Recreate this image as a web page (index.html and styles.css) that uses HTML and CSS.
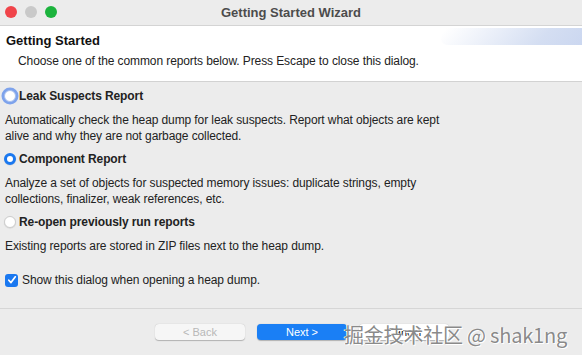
FILE: index.html
```html
<!DOCTYPE html>
<html lang="en">
<head>
  <meta charset="UTF-8">
  <title>Getting Started Wizard</title>
  <link rel="stylesheet" href="styles.css">
</head>
<body>
  <div class="ventana">
    <div class="barra-titulo">
      <div class="semaforo">
        <span class="luz roja"></span>
        <span class="luz gris"></span>
        <span class="luz verde"></span>
      </div>
      <div class="titulo">Getting Started Wizard</div>
    </div>

    <div class="cabecera">
      <div class="degradado"></div>
      <div class="cabecera-titulo">Getting Started</div>
      <div class="cabecera-texto">Choose one of the common reports below. Press Escape to close this dialog.</div>
    </div>

    <div class="cuerpo">
      <div class="opcion">
        <span class="radio foco"></span>
        <span class="opcion-label">Leak Suspects Report</span>
      </div>
      <p class="descripcion">Automatically check the heap dump for leak suspects. Report what objects are kept<br>alive and why they are not garbage collected.</p>

      <div class="opcion">
        <span class="radio marcado"></span>
        <span class="opcion-label">Component Report</span>
      </div>
      <p class="descripcion">Analyze a set of objects for suspected memory issues: duplicate strings, empty<br>collections, finalizer, weak references, etc.</p>

      <div class="opcion">
        <span class="radio"></span>
        <span class="opcion-label">Re-open previously run reports</span>
      </div>
      <p class="descripcion">Existing reports are stored in ZIP files next to the heap dump.</p>

      <div class="check-fila">
        <span class="check">
          <svg width="10" height="10" viewBox="0 0 10 10"><path d="M1.8 5.2 L4 7.6 L8.3 1.8" fill="none" stroke="#fff" stroke-width="1.7" stroke-linecap="round" stroke-linejoin="round"/></svg>
        </span>
        <span>Show this dialog when opening a heap dump.</span>
      </div>
    </div>

    <div class="pie">
      <button class="boton desactivado">&lt; Back</button>
      <button class="boton primario">Next &gt;</button>
      <button class="boton">Cancel</button>
      <div class="marca">掘金技术社区 @ shak1ng</div>
    </div>
  </div>
</body>
</html>
```

FILE: styles.css
```css
body {
  margin: 0;
  font-family: "Liberation Sans", Arial, sans-serif;
  font-size: 12px;
  letter-spacing: -0.1px;
  color: #222;
  background-color: #ececec;
}

.ventana {
  width: 582px;
  height: 355px;
  display: flex;
  flex-direction: column;
  overflow: hidden;
}

.barra-titulo {
  height: 25px;
  background-color: #ececec;
  border-bottom: 1px solid #d4d4d4;
  position: relative;
  display: flex;
  align-items: center;
  justify-content: center;
}

.semaforo {
  position: absolute;
  left: 5px;
  top: 6px;
  display: flex;
  gap: 8px;
}

.luz {
  width: 12px;
  height: 12px;
  border-radius: 50%;
}

.roja { background-color: #f0444a; }
.gris { background-color: #c9c9c9; }
.verde { background-color: #1cb33d; }

.titulo {
  font-weight: bold;
  font-size: 13px;
  letter-spacing: 0;
  color: #4c4c4c;
}

.cabecera {
  height: 55px;
  background-color: #fff;
  border-bottom: 1px solid #d2d2d2;
  position: relative;
  overflow: hidden;
}

.degradado {
  position: absolute;
  right: 0;
  top: 2px;
  width: 150px;
  height: 17px;
  background: linear-gradient(to right, rgba(200, 214, 240, 0), #d4def2 70%, #cbd7f0);
  transform: skewX(-40deg);
  transform-origin: bottom left;
  border-radius: 0 0 0 40px;
}

.cabecera-titulo {
  position: relative;
  font-weight: bold;
  font-size: 13px;
  letter-spacing: 0;
  color: #111;
  padding: 7px 0 0 6px;
}

.cabecera-texto {
  position: relative;
  padding: 6px 0 0 18px;
  color: #222;
}

.cuerpo {
  flex: 1;
  padding: 5px 0 0 5px;
  border-bottom: 1px solid #d6d6d6;
}

.opcion {
  display: flex;
  align-items: center;
  height: 18px;
  gap: 3px;
  margin-left: -1px;
}

.opcion-label {
  font-weight: bold;
  color: #222;
}

.radio {
  width: 12px;
  height: 12px;
  border-radius: 50%;
  background-color: #fff;
  border: 1px solid #cdcdcd;
  box-sizing: border-box;
  box-shadow: 0 0.5px 1px rgba(0, 0, 0, 0.12);
}

.radio.foco {
  border: 1px solid #a9c1ee;
  box-shadow: 0 0 0 2.5px #7ea3ec;
}

.radio.marcado {
  border: 3.5px solid #1a78f0;
  background-color: #fff;
}

.descripcion {
  margin: 7px 0 6px 0;
  line-height: 16px;
}

.check-fila {
  display: flex;
  align-items: center;
  gap: 4px;
  margin-top: 19px;
  margin-left: 0;
}

.check {
  width: 13px;
  height: 13px;
  border-radius: 3px;
  background-color: #1a78f0;
  display: flex;
  align-items: center;
  justify-content: center;
}

.pie {
  height: 46px;
  position: relative;
  display: flex;
  align-items: center;
  padding: 0 0 0 155px;
  gap: 12px;
}

.boton {
  width: 90px;
  height: 16px;
  border-radius: 4px;
  border: none;
  font-family: "Liberation Sans", Arial, sans-serif;
  font-size: 11px;
  background-color: #fff;
  color: #222;
  padding: 0;
  box-shadow: 0 0.5px 1px rgba(0, 0, 0, 0.25);
}

.boton.desactivado {
  background-color: #f6f6f6;
  color: #b8b8b8;
}

.boton.primario {
  background-color: #1a7ff5;
  color: #fff;
}

.marca {
  position: absolute;
  left: 344px;
  top: 11px;
  font-family: "Noto Sans CJK SC", sans-serif;
  font-size: 20px;
  letter-spacing: -0.2px;
  color: #8a8a8a;
  text-shadow: 1px 1px 0 #fff, -1px 0 0 #fff;
}
```
